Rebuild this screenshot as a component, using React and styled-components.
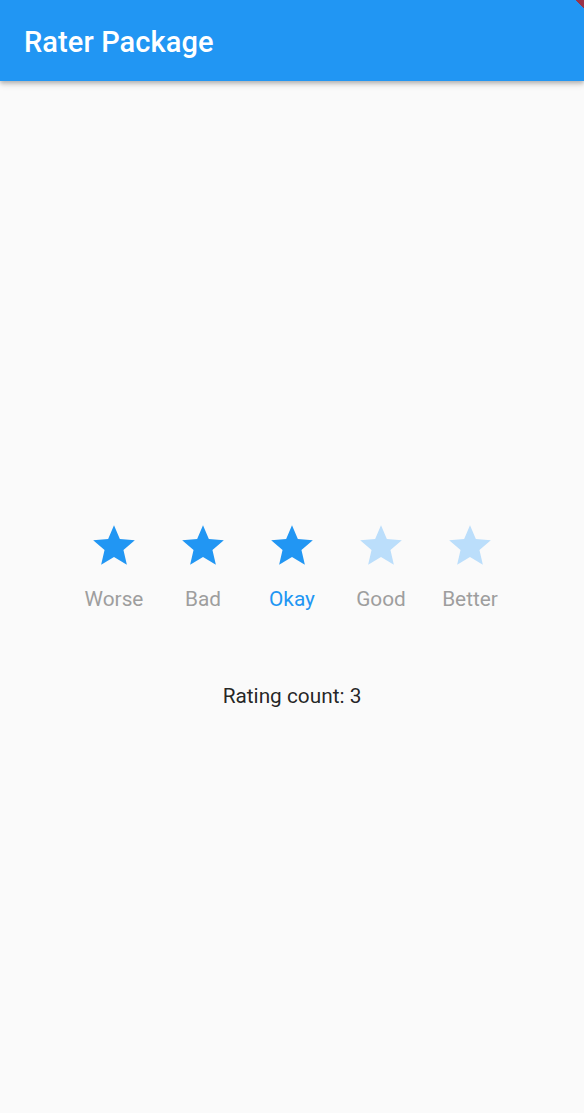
//Import Libraries
import React, { useState } from 'react'
import styled, { createGlobalStyle } from 'styled-components'

const GlobalStyle = createGlobalStyle`
  html, body {
    margin: 0;
    padding: 0;
    background: #fafafa;
    font-family: Roboto, "Liberation Sans", sans-serif;
  }
`

//Styled
const Page = styled.div`
  position: relative;
  width: 584px;
  height: 1113px;
  overflow: hidden;
  background: #fafafa;
`
const AppBar = styled.header`
  position: relative;
  z-index: 1;
  height: 81px;
  display: flex;
  align-items: center;
  padding: 0 24px;
  background: #2196f3;
  box-shadow: 0 2px 4px rgba(0, 0, 0, 0.2), 0 4px 6px rgba(0, 0, 0, 0.12);
`
const Title = styled.h1`
  margin: 0;
  padding-top: 2px;
  font-size: 29px;
  font-weight: 500;
  color: #ffffff;
  letter-spacing: 0.1px;
`
const DebugCorner = styled.div`
  position: absolute;
  top: 0;
  right: 0;
  width: 8px;
  height: 8px;
  background: linear-gradient(45deg, transparent 50%, #9b3347 50%);
  z-index: 2;
`
const Body = styled.main`
  display: flex;
  flex-direction: column;
  align-items: center;
  padding-top: 440px;
`
const Rater = styled.div`
  display: flex;
`
const RateItem = styled.button`
  width: 89px;
  display: flex;
  flex-direction: column;
  align-items: center;
  padding: 0;
  border: none;
  background: none;
  cursor: pointer;
  font-family: inherit;
`
const StarIcon = styled.svg`
  width: 50px;
  height: 50px;
  fill: ${p => (p.$on ? '#2196f3' : '#bbdefb')};
`
const Label = styled.span`
  margin-top: 14px;
  font-size: 20.8px;
  line-height: 28px;
  color: ${p => (p.$active ? '#2196f3' : '#9e9e9e')};
`
const Count = styled.p`
  margin: 69px 0 0;
  font-size: 20.8px;
  line-height: 28px;
  color: rgba(0, 0, 0, 0.87);
`

const labels = ['Worse', 'Bad', 'Okay', 'Good', 'Better']

function Star({ on }) {
  return (
    <StarIcon $on={on} viewBox="0 0 24 24">
      <path d="M12 17.27L18.18 21l-1.64-7.03L22 9.24l-7.19-.61L12 2 9.19 8.63 2 9.24l5.46 4.73L5.82 21z" />
    </StarIcon>
  )
}

function App() {
  const [rating, setRating] = useState(3)
  return (
    <>
      <GlobalStyle />
      <Page>
        <AppBar>
          <Title>Rater Package</Title>
        </AppBar>
        <DebugCorner />
        <Body>
          <Rater>
            {labels.map((l, i) => (
              <RateItem key={l} onClick={() => setRating(i + 1)}>
                <Star on={i < rating} />
                <Label $active={i + 1 === rating}>{l}</Label>
              </RateItem>
            ))}
          </Rater>
          <Count>Rating count: {rating}</Count>
        </Body>
      </Page>
    </>
  )
}

export default App
